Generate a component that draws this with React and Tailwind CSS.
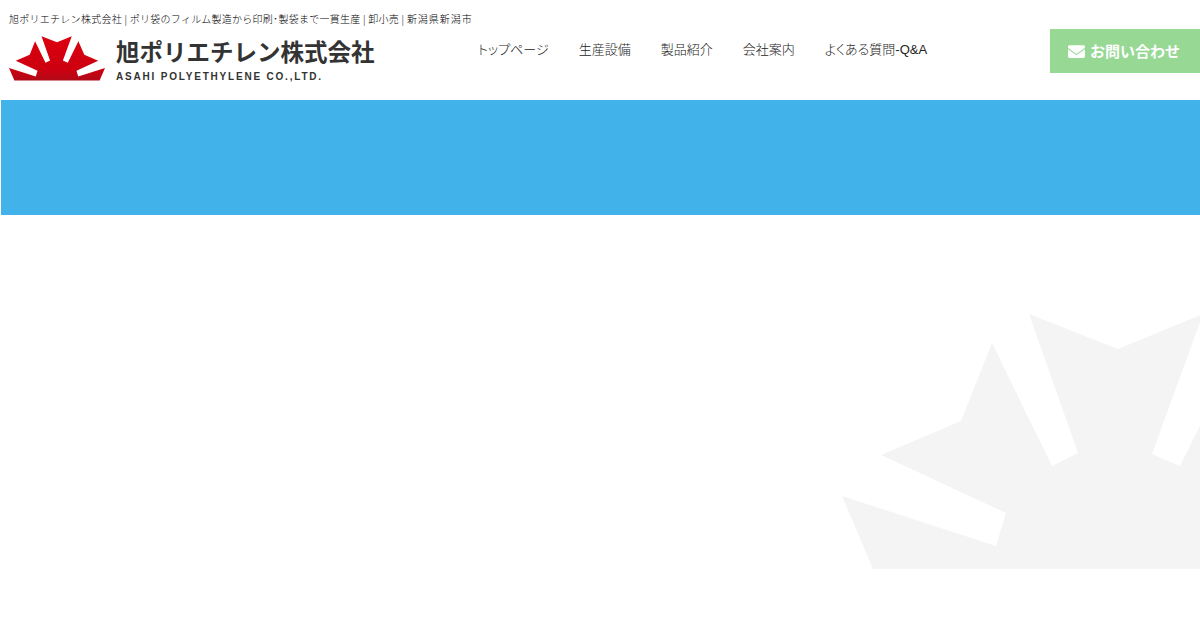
import { FaEnvelope } from "react-icons/fa";

const NAV = ["トップページ", "生産設備", "製品紹介", "会社案内", "よくある質問-Q&A"];

const SUN = "873,569 842,496 996,546 1006,513 881,455 961,421 992,343 1052,466 1078,453 1029,314 1118,349 1203,314 1152,454 1180,466 1241,343 1275,421 1355,455 1230,513 1240,546 1394,496 1363,569";

const App = () => {
  return (
    <div className="h-[632px] w-[1200px] overflow-hidden bg-white font-['Noto_Sans_CJK_JP',sans-serif]">
      {/* Header */}
      <header className="flex h-[100px] items-start pl-[9px]">
        <div className="w-[469px] pt-[11px]">
          <p className="whitespace-nowrap text-[10px] font-light leading-[16px] tracking-[0.27px] text-black">
            旭ポリエチレン株式会社 | ポリ袋のフィルム製造から印刷･製袋まで一貫生産 | 卸小売 | <span className="tracking-[0.95px]">新潟県新潟市</span>
          </p>
          <div className="mt-[9px] flex items-start">
            <svg viewBox="842 314 552 256" className="h-[45px] w-[96px] shrink-0">
              <defs>
                <linearGradient id="logoRed" x1="0" y1="0" x2="0" y2="1">
                  <stop offset="0" stopColor="#dc000f" />
                  <stop offset="0.75" stopColor="#cc0010" />
                  <stop offset="1" stopColor="#b00a18" />
                </linearGradient>
              </defs>
              <polygon points={SUN} fill="url(#logoRed)" />
            </svg>
            <div className="ml-[11px] -mt-[1px] text-[#333]">
              <div className="whitespace-nowrap text-[23.5px] font-bold leading-[32px]">旭ポリエチレン株式会社</div>
              <div className="mt-[4px] whitespace-nowrap font-['Liberation_Sans',sans-serif] text-[10px] font-bold leading-[12px] tracking-[1.8px]">
                ASAHI POLYETHYLENE CO.,LTD.
              </div>
            </div>
          </div>
        </div>

        <nav className="flex gap-[30px] pt-[40px] font-['Liberation_Sans','Noto_Sans_CJK_JP',sans-serif]">
          {NAV.map((item) => (
            <a key={item} className="whitespace-nowrap text-[13px] font-light leading-[20px] text-[#222] [font-feature-settings:'palt']">
              {item}
            </a>
          ))}
        </nav>

        <a className="ml-auto mt-[29px] flex h-[44px] w-[150px] items-center justify-center gap-[5px] bg-[#98d895] pr-[2px] text-[15px] font-bold text-white">
          <FaEnvelope size={17} />
          お問い合わせ
        </a>
      </header>

      {/* Blue band */}
      <div className="ml-px h-[115px] bg-[#41b3ea]" />

      {/* Watermark */}
      <main className="flex justify-end overflow-hidden pt-[99px]">
        <svg viewBox="842 314 358 256" className="h-[256px] w-[358px]">
          <polygon points={SUN} fill="#f4f4f4" />
        </svg>
      </main>
    </div>
  );
};

export default App;
